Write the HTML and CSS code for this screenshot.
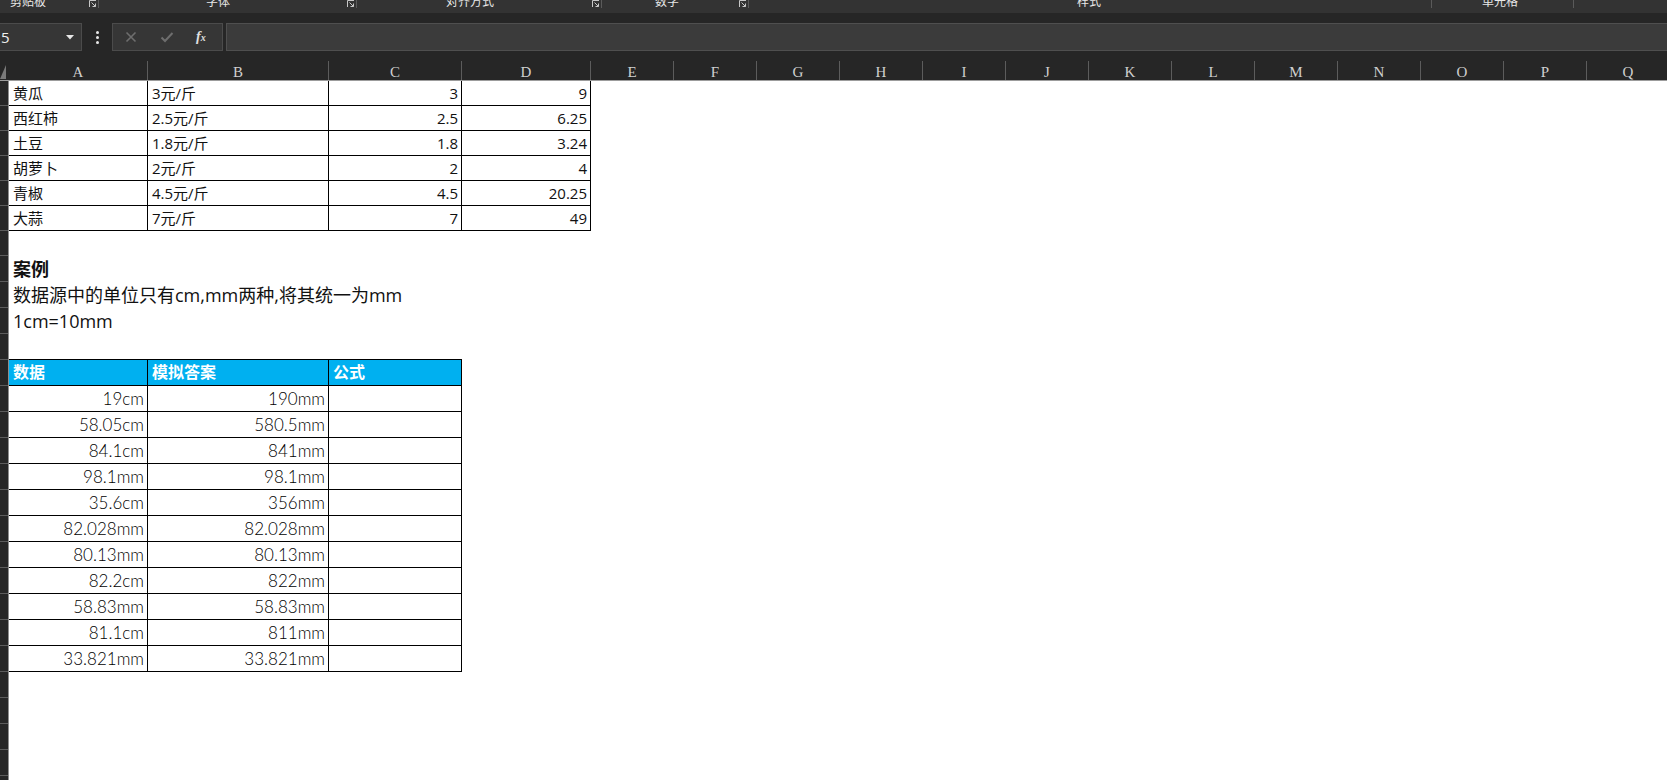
FILE: index.html
```html
<!DOCTYPE html>
<html lang="zh-CN">
<head>
<meta charset="utf-8">
<title>Sheet</title>
<link rel="stylesheet" href="styles.css">
</head>
<body>
<div class="app">
  <div class="ribbon">
    <div class="grp g1"><span class="glabel">剪贴板</span><span class="fill"></span><svg class="launch" width="7" height="7" viewBox="0 0 7 7"><path d="M0.5 7V0.5H7M2.5 2.5L6.5 6.5M6.5 3.5V6.5H3.5" fill="none" stroke="#c8c8c8" stroke-width="1"/></svg><span class="sep"></span></div>
    <div class="grp g2"><span class="glabel">字体</span><span class="fill"></span><svg class="launch" width="7" height="7" viewBox="0 0 7 7"><path d="M0.5 7V0.5H7M2.5 2.5L6.5 6.5M6.5 3.5V6.5H3.5" fill="none" stroke="#c8c8c8" stroke-width="1"/></svg><span class="sep"></span></div>
    <div class="grp g3"><span class="glabel">对齐方式</span><span class="fill"></span><svg class="launch" width="7" height="7" viewBox="0 0 7 7"><path d="M0.5 7V0.5H7M2.5 2.5L6.5 6.5M6.5 3.5V6.5H3.5" fill="none" stroke="#c8c8c8" stroke-width="1"/></svg><span class="sep"></span></div>
    <div class="grp g4"><span class="glabel">数字</span><span class="fill"></span><svg class="launch" width="7" height="7" viewBox="0 0 7 7"><path d="M0.5 7V0.5H7M2.5 2.5L6.5 6.5M6.5 3.5V6.5H3.5" fill="none" stroke="#c8c8c8" stroke-width="1"/></svg><span class="sep"></span></div>
    <div class="grp g5"><span class="glabel">样式</span><span class="fill"></span><span class="sep"></span></div>
    <div class="grp g6"><span class="glabel">单元格</span><span class="fill"></span><span class="sep"></span></div>
  </div>

  <div class="fbar-band">
    <div class="fbar">
      <div class="namebox"><span class="name">5</span><svg class="caret" width="8" height="5" viewBox="0 0 8 5"><path d="M0 0H8L4 4.5Z" fill="#e8e8e8"/></svg></div>
      <div class="dots"><span></span><span></span><span></span></div>
      <div class="fbtns">
        <svg class="bx" width="12" height="12" viewBox="0 0 12 12"><path d="M1.5 1.5L10.5 10.5M10.5 1.5L1.5 10.5" stroke="#6e6e6e" stroke-width="1.6"/></svg>
        <svg class="bok" width="14" height="12" viewBox="0 0 14 12"><path d="M1.5 6.5L5 10L12.5 2" fill="none" stroke="#6e6e6e" stroke-width="2"/></svg>
        <span class="fx"><i>f</i><i class="fxx">x</i></span>
      </div>
      <div class="finput"></div>
    </div>
  </div>

  <div class="colheads">
    <div class="corner"><svg width="8" height="19" viewBox="0 0 8 19"><path d="M6 4V18H0Z" fill="#7a7a7a"/></svg></div>
    <div class="ch wa">A</div>
    <div class="ch wb">B</div>
    <div class="ch wc">C</div>
    <div class="ch wd">D</div>
    <div class="ch">E</div>
    <div class="ch">F</div>
    <div class="ch">G</div>
    <div class="ch">H</div>
    <div class="ch">I</div>
    <div class="ch">J</div>
    <div class="ch">K</div>
    <div class="ch">L</div>
    <div class="ch">M</div>
    <div class="ch">N</div>
    <div class="ch">O</div>
    <div class="ch">P</div>
    <div class="ch">Q</div>
  </div>

  <div class="sheet">
    <div class="rowheads">
      <div class="rh r25"></div><div class="rh r25"></div><div class="rh r25"></div><div class="rh r25"></div><div class="rh r25"></div><div class="rh r25"></div><div class="rh r25"></div>
      <div class="rh"></div><div class="rh"></div><div class="rh"></div><div class="rh"></div><div class="rh"></div><div class="rh"></div><div class="rh"></div>
      <div class="rh"></div><div class="rh"></div><div class="rh"></div><div class="rh"></div><div class="rh"></div><div class="rh"></div><div class="rh"></div>
      <div class="rh"></div><div class="rh"></div><div class="rh"></div><div class="rh"></div><div class="rh"></div><div class="rh"></div><div class="rh"></div>
    </div>
    <div class="cells">
      <div class="t1">
        <div class="c">黄瓜</div><div class="c">3元/斤</div><div class="c num">3</div><div class="c num">9</div>
        <div class="c">西红柿</div><div class="c">2.5元/斤</div><div class="c num">2.5</div><div class="c num">6.25</div>
        <div class="c">土豆</div><div class="c">1.8元/斤</div><div class="c num">1.8</div><div class="c num">3.24</div>
        <div class="c">胡萝卜</div><div class="c">2元/斤</div><div class="c num">2</div><div class="c num">4</div>
        <div class="c">青椒</div><div class="c">4.5元/斤</div><div class="c num">4.5</div><div class="c num">20.25</div>
        <div class="c">大蒜</div><div class="c">7元/斤</div><div class="c num">7</div><div class="c num">49</div>
      </div>
      <div class="blank25"></div>
      <div class="tline bold">案例</div>
      <div class="tline">数据源中的单位只有cm,mm两种,将其统一为mm</div>
      <div class="tline">1cm=10mm</div>
      <div class="blank25"></div>
      <div class="t2">
        <div class="h">数据</div><div class="h">模拟答案</div><div class="h">公式</div>
        <div class="d">19cm</div><div class="d">190mm</div><div class="d"></div>
        <div class="d">58.05cm</div><div class="d">580.5mm</div><div class="d"></div>
        <div class="d">84.1cm</div><div class="d">841mm</div><div class="d"></div>
        <div class="d">98.1mm</div><div class="d">98.1mm</div><div class="d"></div>
        <div class="d">35.6cm</div><div class="d">356mm</div><div class="d"></div>
        <div class="d">82.028mm</div><div class="d">82.028mm</div><div class="d"></div>
        <div class="d">80.13mm</div><div class="d">80.13mm</div><div class="d"></div>
        <div class="d">82.2cm</div><div class="d">822mm</div><div class="d"></div>
        <div class="d">58.83mm</div><div class="d">58.83mm</div><div class="d"></div>
        <div class="d">81.1cm</div><div class="d">811mm</div><div class="d"></div>
        <div class="d">33.821mm</div><div class="d">33.821mm</div><div class="d"></div>
      </div>
    </div>
  </div>
</div>
</body>
</html>
```

FILE: styles.css
```css
* { box-sizing: border-box; }
html, body { margin: 0; padding: 0; }
body {
  width: 1667px;
  height: 780px;
  overflow: hidden;
  background: #ffffff;
  font-family: "Open Sans", "Noto Sans CJK SC", sans-serif;
}
.app { display: flex; flex-direction: column; height: 780px; }

/* ribbon group labels */
.ribbon {
  display: flex;
  height: 13px;
  background: #333333;
  overflow: hidden;
  flex: none;
}
.grp { display: flex; align-items: flex-start; height: 13px; flex: none; }
.g1 { width: 99px; }
.g2 { width: 258px; }
.g3 { width: 245px; }
.g4 { width: 147px; }
.g5 { width: 683px; }
.g6 { width: 142px; }
.glabel {
  display: block;
  flex: none;
  text-align: center;
  font-family: "Noto Sans CJK SC", sans-serif;
  font-size: 12px;
  line-height: 12px;
  color: #e8e8e8;
  margin-top: -5px;
  white-space: nowrap;
}
.g1 .glabel { width: 56px; }
.g2 .glabel { width: 238px; }
.g3 .glabel { width: 226px; }
.g4 .glabel { width: 130px; }
.g5 .glabel { width: 680px; }
.g6 .glabel { width: 136px; }
.fill { flex: 1; }
.launch { display: block; flex: none; margin-right: 2px; }
.sep { display: block; flex: none; width: 1px; height: 8px; background: #5a5a5a; }

/* formula bar */
.fbar-band { background: #262626; padding: 10px 0; flex: none; }
.fbar { display: flex; height: 28px; align-items: stretch; }
.namebox {
  width: 82px;
  display: flex;
  align-items: center;
  justify-content: space-between;
  background: #363636;
  border: 1px solid #4b4b4b;
  border-left: none;
  padding: 0 7px 0 1px;
}
.name { color: #f0f0f0; font-size: 15px; line-height: 26px; }
.caret { display: block; }
.dots {
  width: 30px;
  display: flex;
  flex-direction: column;
  align-items: center;
  justify-content: center;
  gap: 2px;
}
.dots span { width: 3px; height: 3px; background: #e8e8e8; border-radius: 50%; }
.fbtns {
  width: 111px;
  display: flex;
  align-items: center;
  padding: 0 0 0 12px;
  background: #363636;
  border: 1px solid #4b4b4b;
}
.fbtns svg { display: block; flex: none; }
.bok { margin-left: 23px; }
.fx {
  margin-left: 22px;
  font-family: "Liberation Serif", serif;
  color: #e0e0e0;
  font-size: 14px;
  font-weight: bold;
  line-height: 14px;
}
.fxx { font-size: 10px; }
.finput {
  flex: 1;
  margin-left: 3px;
  background: #3b3b3b;
  border: 1px solid #4f4f4f;
  border-right: none;
}

/* column headers */
.colheads {
  display: flex;
  height: 20px;
  background: #262626;
  border-bottom: 1px solid #9c9c9c;
  flex: none;
  overflow: hidden;
}
.corner { width: 9px; flex: none; }
.corner svg { display: block; }
.ch {
  width: 83px;
  flex: none;
  border-right: 1px solid #5c5c5c;
  color: #d0d0d0;
  font-family: "Liberation Serif", serif;
  font-size: 15px;
  line-height: 19px;
  padding-top: 2px;
  text-align: center;
}
.wa { width: 139px; }
.wb { width: 181px; }
.wc { width: 133px; }
.wd { width: 129px; }

/* sheet */
.sheet { display: flex; flex: 1; overflow: hidden; }
.rowheads {
  width: 9px;
  flex: none;
  background: #262626;
  border-right: 1px solid #8e8e8e;
  display: flex;
  flex-direction: column;
}
.rh { height: 26px; flex: none; border-bottom: 1px solid #5c5c5c; }
.rh.r25 { height: 25px; }
.cells { flex: 1; display: flex; flex-direction: column; background: #fff; }

.t1 {
  display: grid;
  grid-template-columns: 139px 181px 133px 129px;
  grid-auto-rows: 25px;
  width: 582px;
}
.t1 .c {
  border-right: 1px solid #000;
  border-bottom: 1px solid #000;
  font-size: 15px;
  line-height: 24px;
  color: #111;
  padding: 0 4px;
  white-space: nowrap;
}
.t1 .num { text-align: right; padding-right: 3px; }

.blank25 { height: 25px; flex: none; }
.tline {
  height: 26px;
  flex: none;
  font-size: 18px;
  line-height: 26px;
  color: #111;
  padding-left: 4px;
  white-space: nowrap;
}
.tline.bold { font-weight: bold; }

.t2 {
  display: grid;
  grid-template-columns: 139px 181px 133px;
  grid-auto-rows: 26px;
  width: 453px;
  border-top: 1px solid #000;
}
.t2 .h {
  background: #00b0f0;
  color: #ffffff;
  font-weight: bold;
  font-size: 16px;
  line-height: 25px;
  padding-left: 4px;
  border-right: 1px solid #000;
  border-bottom: 1px solid #000;
}
.t2 .d {
  border-right: 1px solid #000;
  border-bottom: 1px solid #000;
  font-family: "Lato", "Open Sans", sans-serif;
  font-size: 17px;
  font-weight: 300;
  line-height: 25px;
  color: #000;
  text-align: right;
  padding-right: 3px;
  white-space: nowrap;
}
```
